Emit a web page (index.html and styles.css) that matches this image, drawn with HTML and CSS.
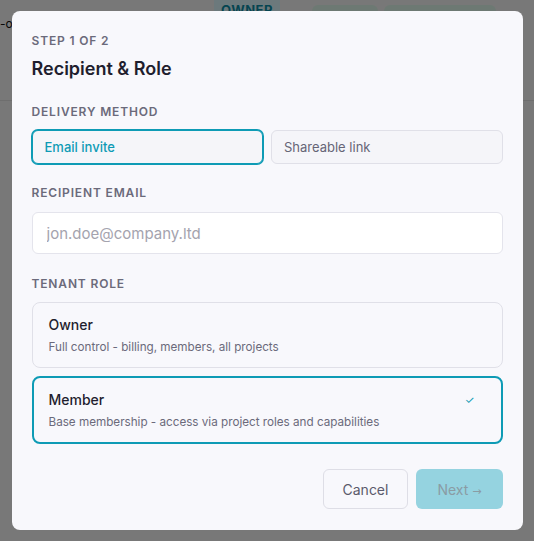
FILE: index.html
```html
<!DOCTYPE html>
<html lang="en">
  <head>
    <meta charset="UTF-8" />
    <meta name="viewport" content="width=device-width, initial-scale=1.0" />
    <title>Invite member</title>

    <link rel="stylesheet" href="styles.css">
  </head>
  <body>
    <div class="page">
      <div class="members-row">
        <span class="member-name">-o</span>
        <span class="badge">OWNER</span>
        <span class="pill pill-short"></span>
        <span class="pill pill-long"></span>
      </div>
    </div>

    <div class="overlay">
      <div class="modal">
        <div class="step">STEP 1 OF 2</div>
        <h2 class="title">Recipient &amp; Role</h2>

        <div class="field field-delivery">
          <div class="label">DELIVERY METHOD</div>
          <div class="segmented">
            <button class="seg seg-active">Email invite</button>
            <button class="seg">Shareable link</button>
          </div>
        </div>

        <div class="field field-email">
          <label class="label" for="email">RECIPIENT EMAIL</label>
          <input id="email" class="input" type="email" placeholder="jon.doe@company.ltd" />
        </div>

        <div class="field field-role">
          <div class="label">TENANT ROLE</div>
          <div class="roles">
            <div class="role">
              <div class="role-text">
                <div class="role-name">Owner</div>
                <div class="role-desc">Full control - billing, members, all projects</div>
              </div>
            </div>
            <div class="role role-active">
              <div class="role-text">
                <div class="role-name">Member</div>
                <div class="role-desc">Base membership - access via project roles and capabilities</div>
              </div>
              <span class="check">✓</span>
            </div>
          </div>
        </div>

        <div class="footer">
          <button class="btn btn-cancel">Cancel</button>
          <button class="btn btn-next" disabled>Next <span class="arrow">→</span></button>
        </div>
      </div>
    </div>
  </body>
</html>
```

FILE: styles.css
```css
* {
  margin: 0;
  padding: 0;
  box-sizing: border-box;
}

body {
  font-family: Inter, "Noto Sans", sans-serif;
  color: #1f1e2e;
  background-color: #f0f0f0;
}

/* page behind the dialog */

.page {
  height: 541px;
  overflow: hidden;
}

.members-row {
  display: flex;
  align-items: flex-start;
  height: 101px;
  border-bottom: 1px solid #dcdcdc;
}

.member-name {
  width: 214px;
  padding-top: 16px;
  font-size: 12px;
  color: #111;
}

.badge {
  width: 66px;
  margin-top: -6px;
  padding: 8px 0;
  border-radius: 4px;
  background-color: #d9f3f8;
  color: #0b8aa2;
  font-size: 13px;
  font-weight: 700;
  text-align: center;
  letter-spacing: 0.04em;
}

.pill {
  height: 24px;
  margin-top: 5px;
  border-radius: 6px;
  background-color: #dbf3e6;
}

.pill-short {
  width: 66px;
  margin-left: 32px;
}

.pill-long {
  width: 112px;
  margin-left: 6px;
}

/* dialog */

.overlay {
  position: fixed;
  inset: 0;
  display: flex;
  align-items: center;
  justify-content: center;
  background-color: rgba(0, 0, 0, 0.5);
}

.modal {
  width: 511px;
  padding: 22px 20px 21px;
  border-radius: 8px;
  background-color: #f8f8fc;
}

.step,
.label {
  display: block;
  font-size: 12px;
  line-height: 16px;
  font-weight: 600;
  letter-spacing: 0.07em;
  color: #6b6a7b;
}

.title {
  margin-top: 8px;
  font-size: 18px;
  line-height: 24px;
  font-weight: 600;
}

.field-delivery {
  margin-top: 23px;
}

.field-email {
  margin-top: 21px;
}

.field-role {
  margin-top: 22px;
}

.label {
  margin-bottom: 10px;
}

.field-email .label {
  margin-bottom: 11px;
}

.segmented {
  display: flex;
  gap: 8px;
}

.seg {
  flex: 1;
  height: 34px;
  padding: 0 12px;
  border: 1px solid #e0e0e8;
  border-radius: 6px;
  background-color: #f5f5f9;
  font-family: inherit;
  font-size: 13px;
  color: #666577;
  text-align: left;
}

.seg-active {
  border-color: #0e9bb5;
  box-shadow: 0 0 0 1px #0e9bb5;
  color: #0e9bb5;
  font-weight: 500;
}

.input {
  display: block;
  width: 100%;
  height: 42px;
  padding: 0 14px;
  border: 1px solid #e4e4ec;
  border-radius: 6px;
  background-color: #fff;
  font-family: inherit;
  font-size: 15px;
  color: #1f1e2e;
}

.input::placeholder {
  color: #a4a3ae;
}

.roles {
  display: flex;
  flex-direction: column;
  gap: 8px;
}

.role {
  display: flex;
  justify-content: space-between;
  align-items: flex-start;
  padding: 12px 16px;
  border: 1px solid #e0e0e8;
  border-radius: 8px;
}

.role-active {
  padding: 12px 15px;
  border: 2px solid #0e9bb5;
}

.role-name {
  font-size: 14px;
  line-height: 20px;
  font-weight: 500;
}

.role-desc {
  margin-top: 4px;
  font-size: 0.73rem;
  line-height: 16px;
  color: #6b6a7b;
}

.check {
  margin-top: 3px;
  margin-right: 11px;
  font-size: 11px;
  color: #0e9bb5;
}

.footer {
  display: flex;
  justify-content: flex-end;
  gap: 8px;
  margin-top: 25px;
}

.btn {
  height: 40px;
  border-radius: 6px;
  font-family: inherit;
  font-size: 14px;
}

.btn-cancel {
  padding: 0 19px;
  border: 1px solid #dedee6;
  background-color: #f8f8fc;
  color: #5b5a6b;
}

.btn-next {
  padding: 0 21px;
  border: 0;
  background-color: #95d3e0;
  color: #8a9ca4;
}

.arrow {
  font-family: "DejaVu Sans", sans-serif;
  font-size: 11px;
}
```
